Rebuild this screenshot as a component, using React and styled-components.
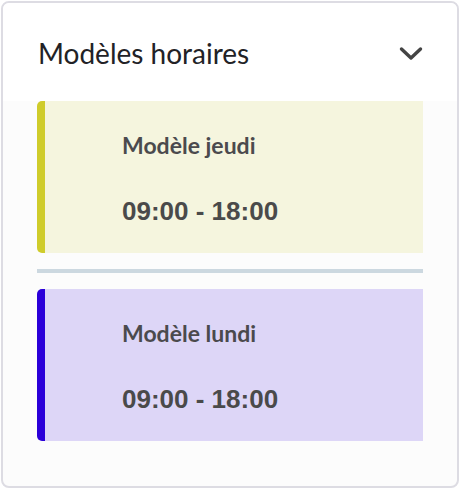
import React, { useState } from "react";
import styled, { createGlobalStyle } from "styled-components";

const GlobalStyle = createGlobalStyle`
  body {
    margin: 0;
    background: #ffffff;
    font-family: "Lato", "Open Sans", sans-serif;
  }
`;

const templates = [
  { id: 1, name: "Modèle jeudi", start: "09:00", end: "18:00", accent: "#cfcc2b", tint: "#f5f5de" },
  { id: 2, name: "Modèle lundi", start: "09:00", end: "18:00", accent: "#2b00d9", tint: "#ddd6f7" },
];

const Chevron = ({ open }) => (
  <svg width="24" height="16" viewBox="0 0 24 16" style={{ transform: open ? "none" : "rotate(180deg)" }}>
    <path d="M2.5 3 L12 12 L21.5 3" fill="none" stroke="#444" strokeWidth="3.4" strokeLinecap="round" strokeLinejoin="round" />
  </svg>
);

const App = () => {
  const [open, setOpen] = useState(true);

  return (
    <>
      <GlobalStyle />
      <Page>
        <Panel>
          <Header onClick={() => setOpen(!open)}>
            <Title>Modèles horaires</Title>
            <Chevron open={open} />
          </Header>
          {open && (
            <Body>
              {templates.map((t, i) => (
                <React.Fragment key={t.id}>
                  {i > 0 && <Divider />}
                  <TemplateCard accent={t.accent} tint={t.tint}>
                    <CardName>{t.name}</CardName>
                    <CardHours>
                      {t.start} - {t.end}
                    </CardHours>
                  </TemplateCard>
                </React.Fragment>
              ))}
            </Body>
          )}
        </Panel>
      </Page>
    </>
  );
};

const Page = styled.div`
  padding: 1px;
  width: 460px;
  box-sizing: border-box;
`;

const Panel = styled.div`
  border: 2px solid #dddce3;
  border-radius: 8px;
  overflow: hidden;
  background: #fcfcfc;
  height: 487px;
  box-sizing: border-box;
`;

const Header = styled.div`
  display: flex;
  align-items: center;
  justify-content: space-between;
  height: 98px;
  padding: 0 34px 0 35px;
  background: #ffffff;
  cursor: pointer;
  user-select: none;

  svg {
    margin-top: 4px;
  }
`;

const Title = styled.h2`
  margin: 0;
  font-size: 28px;
  font-weight: 400;
  color: #222226;
  position: relative;
  top: 1px;
`;

const Body = styled.div`
  display: flex;
  flex-direction: column;
  gap: 16px;
  padding: 0 34px;
`;

const TemplateCard = styled.div`
  height: 152px;
  box-sizing: border-box;
  display: flex;
  flex-direction: column;
  padding: 30px 0 0 77px;
  background: ${(p) => p.tint};
  border-left: 8px solid ${(p) => p.accent};
  border-radius: 5px 0 0 5px;
`;

const CardName = styled.div`
  font-size: 23px;
  font-weight: 700;
  color: #4b4a4d;
  line-height: 28px;
`;

const CardHours = styled.div`
  margin-top: 37px;
  font-family: "Liberation Sans", Arial, sans-serif;
  font-size: 26px;
  font-weight: 700;
  color: #4a4a4a;
  line-height: 30px;
`;

const Divider = styled.div`
  height: 4px;
  background: #ccd8e0;
`;

export default App;
